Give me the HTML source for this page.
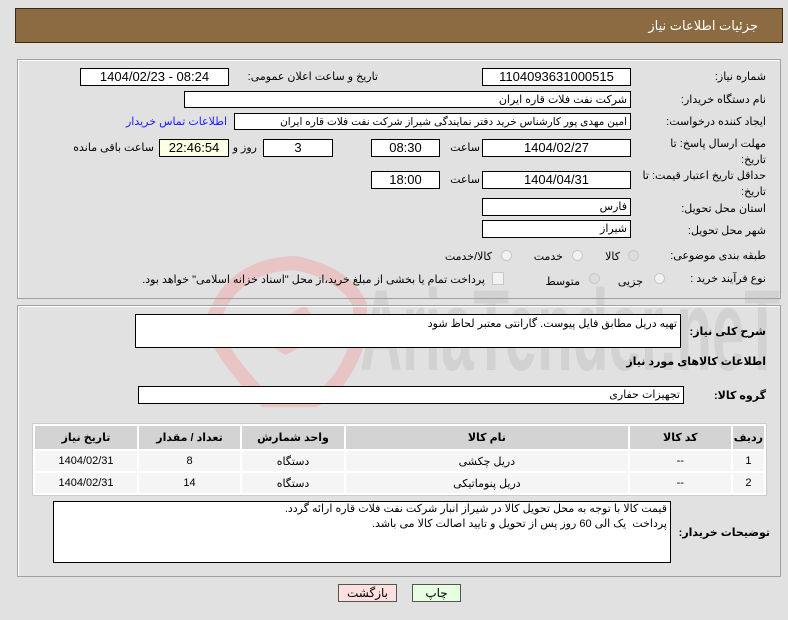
<!DOCTYPE html>
<html><head><meta charset="utf-8"><style>
body{margin:0;width:788px;height:620px;background:#e1e1e1;font-family:"Liberation Sans","DejaVu Sans",sans-serif;font-size:11px;color:#000;position:relative;overflow:hidden}
.a{position:absolute;white-space:nowrap}
.box{position:absolute;background:#fff;border:1px solid #000;box-sizing:border-box;text-align:center;line-height:16px;font-size:13px;overflow:hidden;white-space:nowrap}
.r{text-align:right;padding-right:3px;font-size:11px;direction:rtl}
.lab{position:absolute;white-space:nowrap;direction:rtl;text-align:right}
.panel{position:absolute;border:1px solid #a0a0a0;box-shadow:1px 1px 0 #fff inset}
.rad{position:absolute;width:11px;height:11px;border-radius:50%;border:1px solid #c8c8c8;background:#f2f2f2;box-sizing:border-box}
table{position:absolute;left:32px;top:423px;width:735px;border-collapse:separate;border-spacing:2px;background:#fff;border:1px solid #ccc}
th{background:#d3d3d3;height:21px;font-weight:bold;font-size:11px}
td{background:#f5f5f5;height:18px;text-align:center;font-size:11px}
b{font-size:11px}
</style></head><body>
<div class="a" style="left:15px;top:8px;width:768px;height:35px;background:#8c6b43;border:1px solid #3a2a10;box-sizing:border-box"></div>
<div class="lab" style="right:30px;top:18px;color:#fff;font-size:13px">جزئیات اطلاعات نیاز</div>

<svg class="a" style="left:195px;top:245px" width="590" height="165">
<path d="M20 70 Q40 20 100 18 Q150 28 165 60 L165 90 Q150 140 120 155 L70 155 Q35 120 20 90Z" fill="none" stroke="#e8c4c4" stroke-width="14"/>
<path d="M60 90 L110 60 L130 90 L90 110Z" fill="#e8c4c4"/>
<text x="165" y="125" font-size="115" font-family="Liberation Sans" font-weight="bold" fill="#d2d2d2" textLength="420" lengthAdjust="spacingAndGlyphs">AriaTender.neT</text>
</svg>

<div class="panel" style="left:17px;top:59px;width:762px;height:238px"></div>
<div class="lab" style="right:22px;top:70px">شماره نیاز:</div>
<div class="box" style="left:482px;top:68px;width:149px;height:18px">1104093631000515</div>
<div class="lab" style="right:410px;top:70px">تاریخ و ساعت اعلان عمومی:</div>
<div class="box" style="left:80px;top:68px;width:149px;height:18px">1404/02/23 - 08:24</div>

<div class="lab" style="right:22px;top:93px">نام دستگاه خریدار:</div>
<div class="box r" style="left:184px;top:91px;width:447px;height:17px">شرکت نفت فلات قاره ایران</div>

<div class="lab" style="right:22px;top:115px">ایجاد کننده درخواست:</div>
<div class="box r" style="left:234px;top:113px;width:397px;height:17px;font-size:10.5px">امین مهدی پور کارشناس خرید دفتر نمایندگی شیراز شرکت نفت فلات قاره ایران</div>
<div class="lab" style="right:561px;top:115px;color:#1a1aff">اطلاعات تماس خریدار</div>

<div class="lab" style="right:22px;top:136px;line-height:16px;width:120px;white-space:normal">مهلت ارسال پاسخ: تا تاریخ:</div>
<div class="box" style="left:482px;top:139px;width:149px;height:18px">1404/02/27</div>
<div class="lab" style="right:308px;top:141px">ساعت</div>
<div class="box" style="left:371px;top:139px;width:69px;height:18px">08:30</div>
<div class="box" style="left:263px;top:139px;width:70px;height:18px">3</div>
<div class="lab" style="right:531px;top:141px">روز و</div>
<div class="box" style="left:159px;top:139px;width:70px;height:18px;background:#ffffe6">22:46:54</div>
<div class="lab" style="right:634px;top:141px">ساعت باقی مانده</div>

<div class="lab" style="right:22px;top:168px;line-height:16px;width:130px;white-space:normal">حداقل تاریخ اعتبار قیمت: تا تاریخ:</div>
<div class="box" style="left:482px;top:171px;width:149px;height:18px">1404/04/31</div>
<div class="lab" style="right:308px;top:173px">ساعت</div>
<div class="box" style="left:371px;top:171px;width:69px;height:18px">18:00</div>

<div class="lab" style="right:22px;top:202px">استان محل تحویل:</div>
<div class="box r" style="left:482px;top:198px;width:149px;height:18px">فارس</div>
<div class="lab" style="right:22px;top:224px">شهر محل تحویل:</div>
<div class="box r" style="left:482px;top:220px;width:149px;height:18px">شیراز</div>

<div class="lab" style="right:22px;top:249px">طبقه بندی موضوعی:</div>
<div class="rad" style="left:628px;top:250px;background:#ddd"></div>
<div class="lab" style="right:168px;top:250px">کالا</div>
<div class="rad" style="left:572px;top:250px"></div>
<div class="lab" style="right:225px;top:250px">خدمت</div>
<div class="rad" style="left:501px;top:250px"></div>
<div class="lab" style="right:296px;top:250px">کالا/خدمت</div>

<div class="lab" style="right:22px;top:272px">نوع فرآیند خرید :</div>
<div class="rad" style="left:654px;top:273px"></div>
<div class="lab" style="right:145px;top:275px">جزیی</div>
<div class="rad" style="left:589px;top:273px;background:#ddd"></div>
<div class="lab" style="right:208px;top:275px">متوسط</div>
<div class="a" style="left:492px;top:272px;width:10px;height:11px;border:1px solid #c8c8c8;background:#f2f2f2"></div>
<div class="lab" style="right:303px;top:273px">پرداخت تمام یا بخشی از مبلغ خرید،از محل "اسناد خزانه اسلامی" خواهد بود.</div>

<div class="panel" style="left:17px;top:305px;width:762px;height:270px"></div>
<div class="lab" style="right:22px;top:325px"><b>شرح کلی نیاز:</b></div>
<div class="box r" style="left:135px;top:314px;width:546px;height:34px;line-height:18px">تهیه دریل مطابق فایل پیوست. گارانتی معتبر لحاظ شود</div>
<div class="lab" style="right:22px;top:355px"><b>اطلاعات کالاهای مورد نیاز</b></div>
<div class="lab" style="right:22px;top:389px"><b>گروه کالا:</b></div>
<div class="box r" style="left:138px;top:386px;width:546px;height:18px">تجهیزات حفاری</div>

<table dir="rtl">
<tr><th style="width:24px">ردیف</th><th style="width:99px">کد کالا</th><th>نام کالا</th><th style="width:100px">واحد شمارش</th><th style="width:99px">تعداد / مقدار</th><th style="width:100px">تاریخ نیاز</th></tr>
<tr><td>1</td><td>--</td><td>دریل چکشی</td><td>دستگاه</td><td>8</td><td>1404/02/31</td></tr>
<tr><td>2</td><td>--</td><td>دریل پنوماتیکی</td><td>دستگاه</td><td>14</td><td>1404/02/31</td></tr>
</table>

<div class="lab" style="right:18px;top:526px"><b>توضیحات خریدار:</b></div>
<div class="box" style="left:53px;top:501px;width:618px;height:62px;text-align:right;direction:rtl;padding-right:3px;line-height:15px;font-size:11px;white-space:normal">قیمت کالا با توجه به محل تحویل کالا در شیراز انبار شرکت نفت فلات قاره ارائه گردد.<br>پرداخت&nbsp; یک الی 60 روز پس از تحویل و تایید اصالت کالا می باشد.</div>

<div class="box" style="left:338px;top:584px;width:59px;height:18px;background:#ffe0e0;border-color:#555;font-size:12px">بازگشت</div>
<div class="box" style="left:412px;top:584px;width:49px;height:18px;background:#e6ffe0;border-color:#555;font-size:12px">چاپ</div>
</body></html>
